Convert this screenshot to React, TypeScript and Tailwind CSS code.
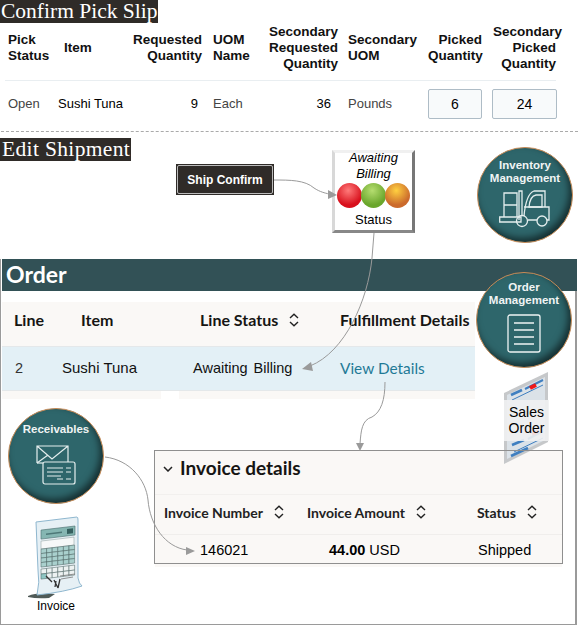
const sans = "font-['Liberation_Sans',Arial,sans-serif]";
const oracle = "font-['Lato','Noto_Sans',sans-serif]";

function Sort({ className = "" }: { className?: string }) {
  return (
    <svg width="10" height="14" viewBox="0 0 10 14" className={className} fill="none" stroke="#222" strokeWidth="1.4">
      <path d="M1 5 L5 1.2 L9 5" />
      <path d="M1 9 L5 12.8 L9 9" />
    </svg>
  );
}

function Circle({ title, className, children }: { title: React.ReactNode; className: string; children: React.ReactNode }) {
  return (
    <div className={`absolute w-[96px] h-[96px] rounded-full bg-[#2e666b] border border-[#c98a55] shadow-[inset_-3px_-4px_7px_rgba(0,0,0,0.55)] flex flex-col items-center text-white text-[11.5px] font-bold leading-[13px] text-center ${sans} ${className}`}>
      <div className="text-[#f0f4f4]">{title}</div>
      {children}
    </div>
  );
}

function Header({ children, className = "" }: { children: React.ReactNode; className?: string }) {
  return <div className={`self-center whitespace-nowrap font-bold text-[13.5px] leading-[16px] text-[#111] ${className}`}>{children}</div>;
}

function Ball({ from, to }: { from: string; to: string }) {
  return <div className="w-[25px] h-[25px] rounded-full" style={{ background: `radial-gradient(circle at 45% 30%, ${from}, ${to} 65%)` }} />;
}

function PickTable() {
  return (
    <div className={`${sans} grid grid-cols-[56px_64px_77px_52px_84px_90px_54px_74px] ml-[5px] w-[551px]`}>
      <Header className="pl-[3px]">Pick<br />Status</Header>
      <Header className="pl-[3px] pb-[1px]">Item</Header>
      <Header className="text-right">Requested<br />Quantity</Header>
      <Header className="pl-[11px]">UOM<br />Name</Header>
      <Header className="text-right">Secondary<br />Requested<br />Quantity</Header>
      <Header className="pl-[10px]">Secondary<br />UOM</Header>
      <Header className="text-right">Picked<br />Quantity</Header>
      <Header className="text-right"><span className="inline-block -mr-[6px]">Secondary</span><br />Picked<br />Quantity</Header>
      <div className="col-span-8 h-px bg-[#e9eef1] mt-[8px] mb-[8px]" />
      <div className="self-center pl-[3px] text-[13px] text-[#444]">Open</div>
      <div className="self-center text-[13px] text-black -ml-[3px]">Sushi Tuna</div>
      <div className="self-center text-right pr-[4px] text-[13px] text-black">9</div>
      <div className="self-center pl-[11px] text-[13px] text-[#444]">Each</div>
      <div className="self-center text-right pr-[7px] text-[13px] text-black">36</div>
      <div className="self-center pl-[10px] text-[13px] text-[#444]">Pounds</div>
      <div className="h-[30px] w-[54px] flex items-center justify-center border border-[#aebcc6] rounded-[2px] bg-[#f8fafb] text-[14px]">6</div>
      <div className="h-[30px] w-[65px] ml-[10px] flex items-center justify-center border border-[#aebcc6] rounded-[2px] bg-[#f8fafb] text-[14px]">24</div>
    </div>
  );
}

function OrderTable() {
  return (
    <div className={`${oracle} w-[473px] mt-[11px]`}>
      <div className="h-[44px] pb-[8px] bg-[#faf8f6] flex items-center text-[16px] font-bold text-[#161513]">
        <div className="w-[79px] pl-[12px]">Line</div>
        <div className="w-[119px]">Item</div>
        <div className="w-[140px] flex items-center gap-[11px]">Line Status <Sort /></div>
        <div className="whitespace-nowrap">Fulfillment Details</div>
      </div>
      <div className="h-[45px] bg-[#e3f0f6] border-y border-[#e4e8ea] flex items-center text-[14.5px] text-[#111]">
        <div className={`w-[60px] pl-[13px] text-[#333] ${sans}`}>2</div>
        <div className={`w-[131px] text-[15px] ${sans}`}>Sushi Tuna</div>
        <div className={`w-[147px] ${sans} [word-spacing:2px]`}>Awaiting Billing</div>
        <div className="text-[#1f7a96] text-[15.4px]">View Details</div>
      </div>
      <div className="h-[8px] flex">
        <div className="w-[159px] bg-[#faf8f6]" />
        <div className="w-[18px] bg-white" />
        <div className="flex-1 bg-[#faf8f6]" />
      </div>
    </div>
  );
}

function SalesOrderDoc() {
  return (
    <div className="absolute left-[504px] top-[371px] w-[45px] h-[95px]">
      <svg width="45" height="95" viewBox="0 0 45 95" className="absolute inset-0">
        <polygon points="0,22 44,1 44,71 0,93" fill="#c6c8ca" />
        <polygon points="3,24 41,6 41,69 3,88" fill="#dbe2e8" />
        <g stroke="#3f7fc0" strokeWidth="2" fill="none">
          <path d="M7 24 L18 19" strokeWidth="2.5" />
          <path d="M21 18 L39 9" />
          <path d="M8 29 L39 14" strokeWidth="1" />
          <path d="M8 74 L20 69" strokeWidth="2.5" />
          <path d="M24 68 L39 60" />
          <path d="M7 85 L24 77" strokeWidth="2.5" />
          <path d="M10 81 L39 67" strokeWidth="1" />
        </g>
        <path d="M26 17 L32 14" stroke="#f01818" strokeWidth="4" />
        <path d="M28 63 L34 60" stroke="#f01818" strokeWidth="4" />
      </svg>
      <div className={`absolute left-0 right-0 top-[29px] h-[41px] bg-[#f0f1f2]/90 text-[14px] leading-[16px] pt-[4px] text-center text-black ${sans}`}>Sales<br />Order</div>
      <div className="absolute left-0 right-0 top-[79px] h-px bg-[#8f8f8f]" />
    </div>
  );
}

function InvoiceDoc() {
  return (
    <svg width="60" height="90" viewBox="0 0 60 90" className="absolute left-[25px] top-[510px]">
      <path d="M3 86 Q12 82 30 84 L24 88 Q12 89 3 87 Z" fill="#4f5a57" />
      <path d="M11 12 L52 7 Q53 7 53 10 L53 68 Q54 74 57 76 Q40 82 12 85 Q15 72 13 60 Z" fill="#e6f0f5" stroke="#8fb7cf" strokeWidth="1" />
      <g transform="matrix(1 -0.12 0 1 0 2)">
        <rect x="16" y="20" width="34" height="9" fill="#85b6b2" stroke="#4d6f70" strokeWidth="0.6" />
        <rect x="42" y="22" width="6" height="5" fill="#35605f" />
        <rect x="21" y="24" width="16" height="1.5" fill="#4d7877" />
        <rect x="16" y="31" width="33" height="8" fill="#f6f8f8" stroke="#8a9a9a" strokeWidth="0.5" />
        <g stroke="#49605f" strokeWidth="0.5">
          {Array.from({ length: 24 }).map((_, i) => (
            <rect key={i} x={16 + (i % 6) * 5.6} y={39 + Math.floor(i / 6) * 4.5} width="5.6" height="4.5" fill="#a9d0cd" />
          ))}
          {Array.from({ length: 12 }).map((_, i) => (
            <rect key={i} x={16 + (i % 6) * 5.6} y={59 + Math.floor(i / 6) * 5} width="5.6" height="5" fill={i === 6 ? "#8fc6c3" : "#edf2f2"} />
          ))}
        </g>
      </g>
      <path d="M21 66 L27 72 M29 70 L33 78 M35 69 L33 78 M31 71 L30 77" stroke="#333" strokeWidth="1.3" fill="none" />
      <path d="M35 66 L50 64 M36 69 L48 67" stroke="#777" strokeWidth="0.8" />
    </svg>
  );
}

function Arrows() {
  const stroke = "#9a9a9a";
  return (
    <svg width="579" height="625" viewBox="0 0 579 625" className="absolute inset-0 pointer-events-none" fill="none">
      <path d="M274 180 C 290 180, 305 180, 314 188 C 320 192, 325 193, 329 194" stroke={stroke} />
      <polygon points="337,195 328,190 328,199" fill={stroke} />
      <path d="M374 233 L372 258 C 368 300, 345 352, 310 366" stroke={stroke} />
      <polygon points="302,369 311,362 313,371" fill={stroke} />
      <path d="M385 382 C 385 400, 381 412, 372 417 C 362 420, 361 430, 360 444" stroke={stroke} />
      <polygon points="360,451 356,443 364,443" fill={stroke} />
      <path d="M105 457 C 130 460, 146 480, 148 500 C 150 525, 165 547, 187 550" stroke={stroke} />
      <polygon points="195,551 186,547 186,555" fill={stroke} />
    </svg>
  );
}

export default function App() {
  return (
    <div className="relative w-[579px] h-[625px] bg-white overflow-hidden">
      <div className="h-[131px]">
        <div className="w-fit h-[23px] bg-[#2f2b28] text-white px-[1px] text-[21.5px] leading-[23px] font-['Liberation_Serif',serif]">Confirm Pick Slip</div>
        <div className="pt-[1px]"><PickTable /></div>
      </div>
      <div className="h-0 border-t border-dashed border-[#aaa] mx-[1px]" />
      <div className="w-fit h-[23px] mt-[6px] bg-[#2f2b28] text-white pl-[2px] pr-[1px] text-[21.5px] leading-[23px] tracking-[0.35px] font-['Liberation_Serif',serif]">Edit Shipment</div>

      <div className={`absolute left-[176px] top-[164px] w-[98px] h-[31px] bg-[#2f2b28] p-[1px] ${sans}`}>
        <div className="h-full rounded-[2px] border border-[#bbb] flex items-center justify-center text-white font-bold text-[12px]">Ship Confirm</div>
      </div>

      <div className={`absolute left-[332px] top-[150px] w-[83px] h-[83px] bg-white border-[3px] border-t-[#f0f0f0] border-l-[#d8d8d8] border-r-[#777] border-b-[#888] flex flex-col items-center text-black ${sans}`}>
        <div className="italic text-[13px] leading-[16px] text-center -mt-[3px]">Awaiting<br />Billing</div>
        <div className="flex mt-[1px] -space-x-[1px]">
          <Ball from="#ff7a7a" to="#d8101c" />
          <Ball from="#b5dd70" to="#6aa62c" />
          <Ball from="#ffd040" to="#cb6a2c" />
        </div>
        <div className="text-[13px] leading-[15px] mt-[4px]">Status</div>
      </div>

      <Circle title={<>Inventory<br />Management</>} className="left-[477px] top-[147px] pt-[11px]">
        <svg width="52" height="38" viewBox="0 0 52 38" fill="none" stroke="#e4eeee" strokeWidth="1.3" className="mt-[5px]">
          <path d="M5 27 V3 H18 V27 M5 15 H18" />
          <path d="M0.7 27 H22 V32 H0.7 Z" />
          <path d="M20 30 V1 H23 V26" />
          <path d="M25 26 Q27 4 35 1 H46 V17" />
          <path d="M30 17 Q31 6 37 5 H43 V17 Z" />
          <path d="M25 17 H50 V30 H48 M38 30 H29" />
          <circle cx="23" cy="31" r="5.5" />
          <circle cx="43" cy="31" r="5" />
        </svg>
      </Circle>

      <div className="absolute left-0 w-[577px] top-[259px] bottom-0 border-l border-r-2 border-b border-[#9a9a9a] pl-[1px]">
        <div className={`h-[32px] bg-[#325156] text-white text-[23px] font-bold leading-[30px] pl-[4px] -mr-[2px] ${oracle}`}>Order</div>
        <OrderTable />
      </div>

      <Circle title={<>Order<br />Management</>} className="left-[476px] top-[272px] pt-[8px]">
        <svg width="34" height="39" viewBox="0 0 34 39" fill="none" stroke="#eef4f4" strokeWidth="1.3" className="mt-[7px]">
          <rect x="1" y="1" width="32" height="37" rx="2" />
          <path d="M7 9 H27 M7 16 H27 M7 23 H27 M7 30 H27" />
        </svg>
      </Circle>

      <div className={`absolute left-[154px] top-[450px] w-[409px] h-[114px] bg-[#faf8f6] border border-[#8f8f8f] ${oracle}`}>
        <div className="h-[44px] pb-[8px] flex items-center pl-[8px] gap-[7px] text-[#161513] font-bold text-[19px] border-b border-[#f2f0ee]">
          <svg width="10" height="6" viewBox="0 0 10 6" fill="none" stroke="#222" strokeWidth="1.5"><path d="M1 1 L5 5 L9 1" /></svg>
          Invoice details
        </div>
        <div className="h-[40px] pb-[5px] flex items-center text-[14px] font-bold text-[#222] border-b border-[#f0eeec]">
          <div className="w-[152px] pl-[9px] flex items-center gap-[11px] whitespace-nowrap">Invoice Number <Sort /></div>
          <div className="w-[170px] flex items-center gap-[11px] whitespace-nowrap">Invoice Amount <Sort /></div>
          <div className="flex items-center gap-[11px]">Status <Sort /></div>
        </div>
        <div className={`h-[28px] pt-[4px] flex items-center text-[14.5px] text-black ${sans}`}>
          <div className="w-[136px] pl-[45px]">146021</div>
          <div className="w-[157px] pl-[38px] whitespace-nowrap"><b>44.00</b> USD</div>
          <div className="pl-[30px]">Shipped</div>
        </div>
      </div>
      <div className="absolute left-[155px] top-[564px] w-[407px] h-[3px] bg-[#faf8f6]" />

      <SalesOrderDoc />

      <Circle title="Receivables" className="left-[8px] top-[408px] pt-[14px]">
        <svg width="42" height="42" viewBox="0 0 42 42" fill="none" stroke="#e4eeee" strokeWidth="1.2" className="mt-[9px]">
          <path d="M2 18 V1 H33 V17 M2 1 L17 14 L33 1 M2 18 L13 10" />
          <path d="M2 18 H8" />
          <rect x="8" y="17" width="32" height="22" rx="2" fill="#2e666b" />
          <path d="M12 23 H28 M31 23 H36 M12 27 H28 M31 27 H36 M12 31 H26 M22 34 H28 M31 34 H36" />
        </svg>
      </Circle>

      <InvoiceDoc />
      <div className={`absolute left-[37px] top-[599px] text-[12px] leading-[14px] text-black ${sans}`}>Invoice</div>

      <Arrows />
    </div>
  );
}
